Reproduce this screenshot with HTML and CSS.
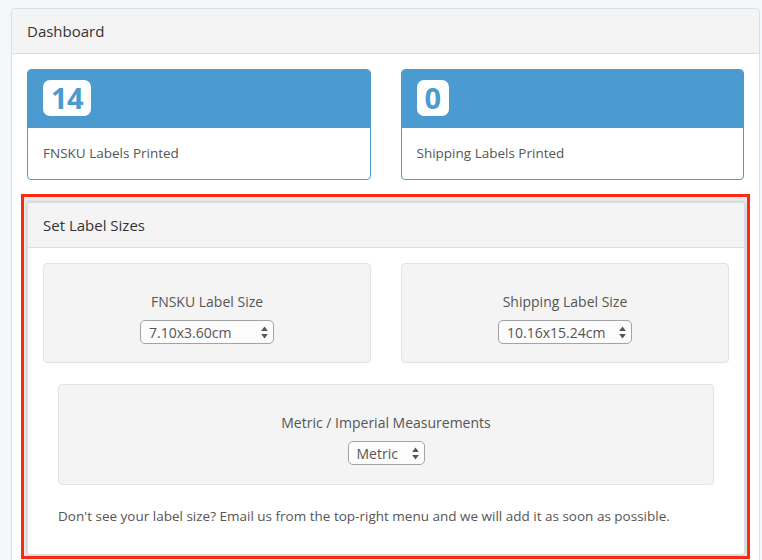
FILE: index.html
```html
<!DOCTYPE html>
<html lang="en">
<head>
  <meta charset="UTF-8">
  <meta name="viewport" content="width=device-width, initial-scale=1.0">
  <title>Dashboard</title>
  <link rel="stylesheet" href="styles.css">
</head>
<body>
  <div class="panel">
    <div class="panel-heading">Dashboard</div>
    <div class="panel-body">
      <div class="stats">
        <div class="stat">
          <div class="stat-top"><span class="stat-count">14</span></div>
          <div class="stat-label">FNSKU Labels Printed</div>
        </div>
        <div class="stat">
          <div class="stat-top"><span class="stat-count">0</span></div>
          <div class="stat-label">Shipping Labels Printed</div>
        </div>
      </div>

      <div class="highlight">
        <div class="panel panel-inner">
          <div class="panel-heading">Set Label Sizes</div>
          <div class="panel-body">
            <div class="wells">
              <div class="well">
                <div class="well-label">FNSKU Label Size</div>
                <span class="select-wrap size">
                  <select name="fnsku_size">
                    <option>7.10x3.60cm</option>
                    <option>6.35x3.81cm</option>
                    <option>5.00x2.50cm</option>
                  </select>
                  <svg class="select-arrows" width="7" height="13" viewBox="0 0 7 13"><path d="M3.5 0.5 L6.8 5 H0.2 Z M3.5 12.5 L6.8 8 H0.2 Z" fill="#555"/></svg>
                </span>
              </div>
              <div class="well">
                <div class="well-label">Shipping Label Size</div>
                <span class="select-wrap size">
                  <select name="shipping_size">
                    <option>10.16x15.24cm</option>
                    <option>10.16x10.16cm</option>
                  </select>
                  <svg class="select-arrows" width="7" height="13" viewBox="0 0 7 13"><path d="M3.5 0.5 L6.8 5 H0.2 Z M3.5 12.5 L6.8 8 H0.2 Z" fill="#555"/></svg>
                </span>
              </div>
            </div>

            <div class="well well-wide">
              <div class="well-label">Metric / Imperial Measurements</div>
              <span class="select-wrap unit">
                <select name="units">
                  <option>Metric</option>
                  <option>Imperial</option>
                </select>
                <svg class="select-arrows" width="7" height="13" viewBox="0 0 7 13"><path d="M3.5 0.5 L6.8 5 H0.2 Z M3.5 12.5 L6.8 8 H0.2 Z" fill="#555"/></svg>
              </span>
            </div>

            <p class="note">Don't see your label size? Email us from the top-right menu and we will add it as soon as possible.</p>
          </div>
        </div>
      </div>
    </div>
  </div>
</body>
</html>
```

FILE: styles.css
```css
body {
  margin: 0;
  padding: 8px 2px 0 11px;
  background-color: #f4f7fa;
  font-family: "Open Sans", Arial, sans-serif;
  font-size: 13.5px;
  color: #555;
}

.panel {
  background-color: #fff;
  border: 1px solid #d6e0e9;
  border-radius: 4px;
}

.panel-heading {
  padding: 10px 15px;
  line-height: 24px;
  font-size: 15px;
  color: #333;
  background-color: #f4f4f4;
  border-bottom: 1px solid #d6e0e9;
  border-radius: 4px 4px 0 0;
}

.panel-body {
  padding: 15px;
}

/* counters */
.stats {
  display: grid;
  grid-template-columns: 1fr 1fr;
  gap: 30px;
}

.stat {
  border: 1px solid #4b9ad0;
  border-radius: 4px;
  overflow: hidden;
}

.stat-top {
  background-color: #4b9ad0;
  padding: 10px 15px 10px;
  height: 38px;
}

.stat-count {
  display: inline-block;
  height: 36px;
  line-height: 36px;
  padding: 0 8px;
  background-color: #fff;
  color: #4b9ad0;
  border-radius: 7px;
  font-size: 29px;
  font-weight: 700;
  letter-spacing: -0.5px;
}

.stat-label {
  padding: 15px 15px 16px;
  line-height: 20px;
}

/* red outline round the label size settings */
.highlight {
  margin: 14px -6px 0 -6px;
  padding: 5px 2px 1px 3px;
  border: 3px solid #fc2a14;
  background-color: #e9e9e9;
}

.panel-inner {
  border-color: #d9dee3;
  border-radius: 3px;
  box-shadow: 0 0 3px rgba(0, 0, 0, 0.2);
}

.wells {
  display: grid;
  grid-template-columns: 1fr 1fr;
  gap: 30px;
}

.well {
  background-color: #f4f4f4;
  border: 1px solid #e3e3e3;
  border-radius: 4px;
  padding: 28px 15px 18px;
  text-align: center;
  height: 52px;
}

.well-wide {
  margin: 21px 15px 0;
  height: 53px;
}

.well-label {
  font-size: 14px;
  line-height: 20px;
  margin-bottom: 8px;
}

.select-wrap {
  position: relative;
  display: inline-block;
  vertical-align: top;
}

.select-wrap select {
  -webkit-appearance: none;
  appearance: none;
  height: 24px;
  padding: 0 20px 0 8px;
  border: 1px solid #a3a3a3;
  border-radius: 5px;
  background-color: #fcfcfc;
  font-family: "Open Sans", Arial, sans-serif;
  font-size: 14px;
  color: #555;
  text-align: left;
}

.size select {
  width: 134px;
}

.unit select {
  width: 77px;
}

.select-arrows {
  position: absolute;
  right: 6px;
  top: 6px;
  pointer-events: none;
}

.note {
  margin: 21px 15px 0;
  line-height: 20px;
  padding-bottom: 13px;
}
```
